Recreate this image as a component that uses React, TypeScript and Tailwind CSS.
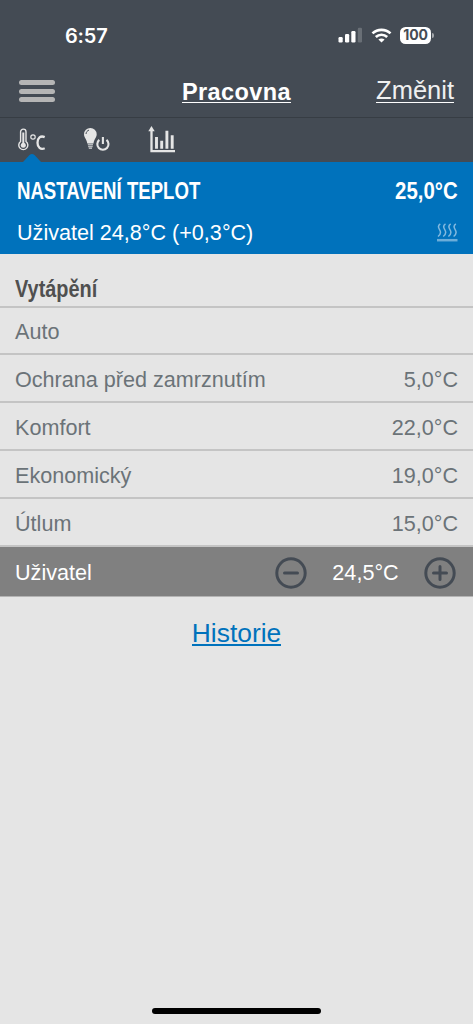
const modes = [
  { label: 'Auto', value: '' },
  { label: 'Ochrana před zamrznutím', value: '5,0°C' },
  { label: 'Komfort', value: '22,0°C' },
  { label: 'Ekonomický', value: '19,0°C' },
  { label: 'Útlum', value: '15,0°C' },
]

function StatusBar() {
  return (
    <div className="flex h-[70px] items-center justify-between pl-[65px] pr-[39px]">
      <span className="pt-px font-['Inter',sans-serif] text-[20px] font-semibold leading-6 tracking-[-0.2px] text-white">
        6:57
      </span>
      <div className="flex items-center">
        <svg width="24" height="16" viewBox="0 0 24 16" fill="#fff">
          <rect x="0.5" y="10" width="4.2" height="5.5" rx="1.2" />
          <rect x="7" y="7" width="4.2" height="8.5" rx="1.2" />
          <rect x="13.3" y="4" width="4.2" height="11.5" rx="1.2" />
          <rect x="19.8" y="0.8" width="4.2" height="14.7" rx="1.2" opacity="0.2" />
        </svg>
        <svg className="ml-[9px]" width="21" height="15" viewBox="0 0 20 15" fill="none" stroke="#fff" strokeWidth="2.7">
          <path d="M1 5.4C6 .6 14 .6 19 5.4" />
          <path d="M4.3 9C7.6 6 12.4 6 15.7 9" />
          <path d="M10 14.6L6.9 11.5C8.6 10 11.4 10 13.1 11.5Z" fill="#fff" stroke="none" />
        </svg>
        <div className="ml-[8px] flex h-[17px] w-[31px] items-center justify-center rounded-[5.5px] bg-white font-['Inter',sans-serif] text-[14px] font-bold leading-none tracking-[-0.2px] text-[#444b54]">
          100
        </div>
        <div className="ml-px h-[5px] w-[2px] rounded-r-full bg-[#a3a7ab]" />
      </div>
    </div>
  )
}

function Header() {
  return (
    <div className="grid h-[47px] grid-cols-3 pl-[19px] pr-[19px]">
      <div className="flex flex-col gap-[3.5px] pt-[10px]">
        <div className="h-[5px] w-9 rounded-full bg-[#b5b5b5]" />
        <div className="h-[5px] w-9 rounded-full bg-[#b5b5b5]" />
        <div className="h-[5px] w-9 rounded-full bg-[#b5b5b5]" />
      </div>
      <div className="flex justify-center pt-[8px]">
        <span className="h-[25px] border-b border-white text-[23.5px] font-bold leading-7 tracking-[0.4px] text-white">
          Pracovna
        </span>
      </div>
      <div className="flex justify-end pt-[6px]">
        <span className="h-[27px] border-b border-white text-[25.5px] leading-7 text-[#f0f0f0]">
          Změnit
        </span>
      </div>
    </div>
  )
}

function Tabs() {
  return (
    <div className="relative flex h-[45px] items-start border-t border-[#373d44] pl-[18px]">
      {/* Temperature */}
      <svg width="28" height="36" viewBox="0 0 28 36" fill="none" stroke="#e5e5e5">
        <path d="M2.600 23.500V13.800a2.700 2.700 0 0 1 5.400 0v9.700a4.500 4.500 0 1 1-5.400 0Z" strokeWidth="1.4" />
        <path d="M5.3 14.500v11" strokeWidth="2" />
        <circle cx="5.3" cy="27.200" r="2.500" fill="#e5e5e5" stroke="none" />
        <circle cx="15" cy="19" r="2.200" strokeWidth="1.2" />
        <path d="M26.700 19.100C22.500 17.200 19.500 20 19.500 24.700s3 7.500 7.200 5.600" strokeWidth="2.300" />
      </svg>
      {/* Light */}
      <svg className="ml-[38px]" width="28" height="36" viewBox="0 0 28 36" fill="none" stroke="#e5e5e5">
        <path d="M6.300 10a6.300 6.300 0 0 1 6.400 6.300c0 3.700-2.700 4.700-3.200 9.200H3.300C2.700 21 0 20 0 16.300A6.300 6.300 0 0 1 6.300 10Z" fill="#e5e5e5" stroke="none" />
        <path d="M2 16c.2-2 1.200-3.300 3-3.900" stroke="#444b54" strokeWidth="1" />
        <path d="M3.800 26.500h5.200M4.100 28.500h4.600M4.800 30.300h3.200" stroke="#b5b8bb" strokeWidth="1.400" />
        <path d="M15.300 21.900a5.600 5.600 0 1 0 7.200 0" strokeWidth="2.100" />
        <path d="M18.900 19v7" strokeWidth="2.100" />
      </svg>
      {/* Chart */}
      <svg className="ml-[36px]" width="28" height="36" viewBox="0 0 28 36" fill="none" stroke="#e5e5e5">
        <path d="M3.500 11v22.200H27" strokeWidth="2.300" />
        <path d="M.3 13.300L3.500 8L6.700 13.300Z" fill="#e5e5e5" stroke="none" />
        <path d="M8.500 19v11.700M13.700 22.700v8M18.900 12.700v18M24.200 17.300v13.400" strokeWidth="2.900" />
      </svg>
      <svg className="absolute bottom-0 left-[22px]" width="20" height="9" viewBox="0 0 20 9">
        <path d="M1 9L7.500 2Q10 0 12.500 2L19 9Z" fill="#0072bc" />
      </svg>
    </div>
  )
}

function HeatingIcon() {
  return (
    <svg width="21" height="19" viewBox="0 0 21 19" fill="none" stroke="#82b9df">
      <path
        d="M3.300 1Q.5 2.500 2 5.500L3.200 8Q4.300 11 1 13.500M8.500 1Q5.700 2.500 7.200 5.500L8.400 8Q9.500 11 6.200 13.500M13.700 1Q10.900 2.500 12.400 5.500L13.600 8Q14.700 11 11.400 13.500M18.900 1Q16.100 2.500 17.600 5.500L18.800 8Q19.900 11 16.600 13.500"
        strokeWidth="1.500"
      />
      <path d="M0 17.200h20.500" strokeWidth="2.500" stroke="#6badd9" />
    </svg>
  )
}

function StepButton({ plus }: { plus?: boolean }) {
  return (
    <button type="button" aria-label={plus ? 'Plus' : 'Minus'} className="h-8 w-8">
      <svg width="32" height="32" viewBox="0 0 32 32" fill="none" stroke="#444b54" strokeWidth="3" strokeLinecap="round">
        <circle cx="16" cy="16" r="14.200" />
        <path d={plus ? 'M9.500 16h13M16 9.500v13' : 'M9.500 16h13'} />
      </svg>
    </button>
  )
}

export default function App() {
  return (
    <div className="flex h-[1024px] w-[473px] flex-col overflow-hidden bg-[#e5e5e5] font-['Liberation_Sans',sans-serif]">
      <div className="bg-[#444b54]">
        <StatusBar />
        <Header />
        <Tabs />
      </div>

      {/* Current temperature */}
      <div className="h-[92px] bg-[#0072bc] pl-[17px] pr-[15px] pt-[14px] text-white">
        <div className="flex h-[30px] items-center justify-between text-[24px] font-bold">
          <span className="origin-left scale-x-[0.775]">NASTAVENÍ TEPLOT</span>
          <span className="origin-right scale-x-[0.85]">25,0°C</span>
        </div>
        <div className="mt-[12px] flex h-7 items-center justify-between text-[21.6px]">
          <span className="pt-[2px]">Uživatel 24,8°C (+0,3°C)</span>
          <HeatingIcon />
        </div>
      </div>

      {/* Modes */}
      <h2 className="h-[54px] border-b-2 border-[#c4c4c4] pl-[15px] pt-[20px] text-[24px] font-bold leading-[30px] text-[#505050]">
        <span className="inline-block origin-left scale-x-[0.83]">Vytápění</span>
      </h2>
      <ul className="text-[21.6px] text-[#6b7378]">
        {modes.map((mode) => (
          <li
            key={mode.label}
            className="flex h-12 items-center justify-between border-b-2 border-[#c4c4c4] pl-[15px] pr-[15px] pt-[4px] first:h-[47px]"
          >
            <span>{mode.label}</span>
            <span>{mode.value}</span>
          </li>
        ))}
      </ul>
      <div className="flex h-[50px] items-center border-b border-[#b4b4b4] bg-[#808080] pl-[15px] pr-[17px] pt-[2px] text-[21.6px] text-white">
        <span className="flex-1 pt-px">Uživatel</span>
        <StepButton />
        <span className="w-[117px] pt-px text-center">24,5°C</span>
        <StepButton plus />
      </div>

      <a href="#" className="mt-[19px] h-[30px] self-center border-b-2 border-[#0072bc] text-[26.4px] leading-[34px] text-[#0072bc]">
        Historie
      </a>

      {/* Home indicator */}
      <div className="mb-[10px] mt-auto h-[6px] w-[169px] self-center rounded-full bg-black" />
    </div>
  )
}
